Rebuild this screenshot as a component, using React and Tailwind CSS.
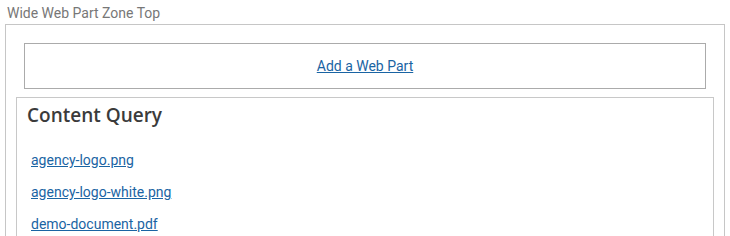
export default function App() {
  const docs = ["agency-logo.png", "agency-logo-white.png", "demo-document.pdf"];

  return (
    <div className="w-[730px] h-[236px] overflow-hidden bg-white font-['Roboto',sans-serif] text-sm">
      {/* Zone label */}
      <div className="h-6 pt-[3px] pl-[7px] leading-5 text-[#777777]">
        Wide Web Part Zone Top
      </div>

      {/* Zone */}
      <div className="ml-[5px] w-[720px] h-[300px] border border-[#c6c6c6] px-[10px] pt-[18px]">
        <div className="mx-2 h-[46px] border border-[#ababab] flex items-center justify-center">
          <a href="#" className="text-[#1a64a3] underline leading-5 -mt-px">
            Add a Web Part
          </a>
        </div>

        {/* Content Query web part */}
        <div className="mt-2 h-[200px] border border-[#c8c8c8] px-[10px] pt-[3px]">
          <h2 className="font-['Open_Sans',sans-serif] font-semibold text-[19px] leading-7 text-[#3b3b3b]">
            Content Query
          </h2>
          <ul className="mt-[21px] pl-1 space-y-3">
            {docs.map((doc) => (
              <li key={doc} className="leading-5">
                <a href="#" className="text-[#1a64a3] underline">
                  {doc}
                </a>
              </li>
            ))}
          </ul>
        </div>
      </div>
    </div>
  );
}
